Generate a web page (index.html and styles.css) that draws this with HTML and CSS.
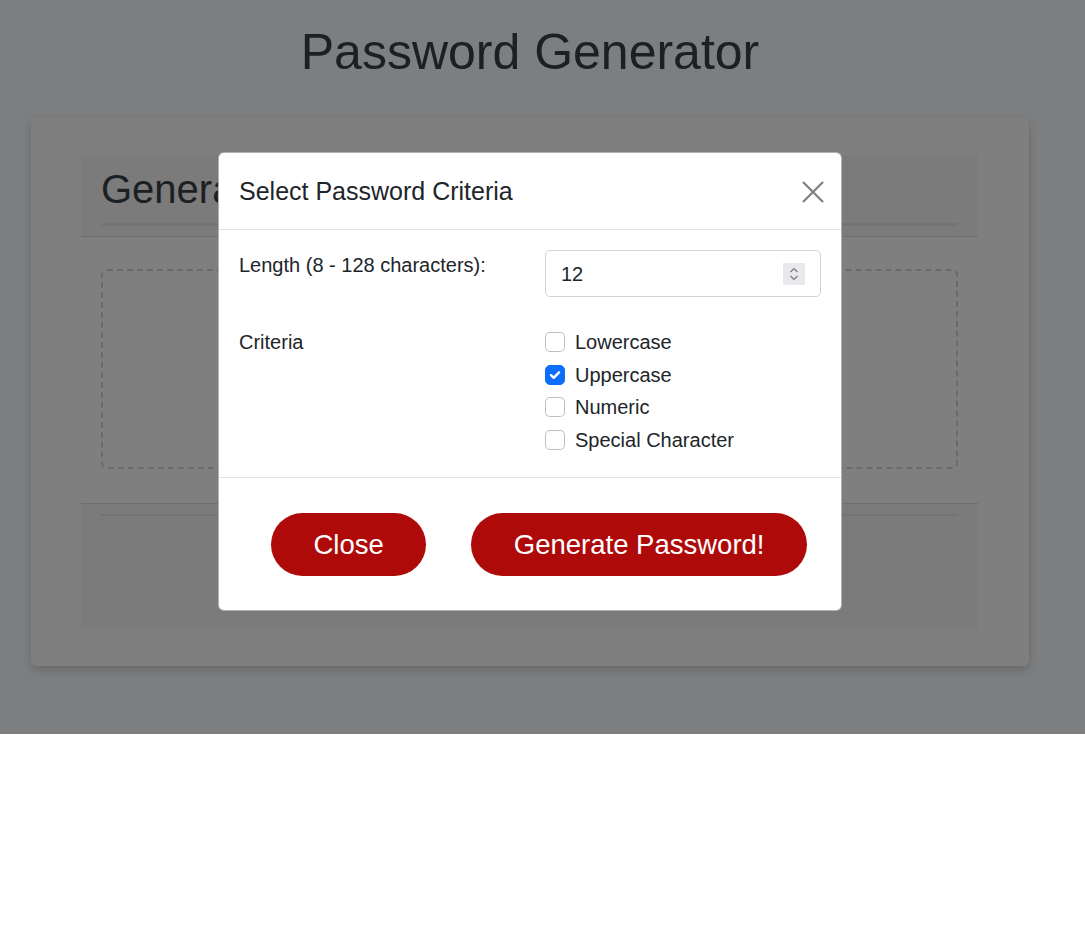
FILE: index.html
```html
<!DOCTYPE html>
<html lang="en">
<head>
<meta charset="utf-8">
<title>Password Generator</title>
<link rel="stylesheet" href="styles.css">
</head>
<body>
<div class="page">
  <div class="wrapper">
    <h1 class="page-title">Password Generator</h1>
    <div class="outer-card">
      <div class="card">
        <div class="card-header">
          <h2 class="card-title">Generate a Password</h2>
          <div class="header-rule"></div>
        </div>
        <div class="card-body">
          <div class="dash-box"></div>
        </div>
        <div class="card-footer">
          <div class="footer-rule"></div>
        </div>
      </div>
    </div>
  </div>
  <div class="backdrop"></div>
</div>

<div class="modal">
  <div class="modal-header">
    <h5 class="modal-title">Select Password Criteria</h5>
    <button class="btn-close" type="button" aria-label="Close">
      <svg width="22" height="22" viewBox="0 0 22 22"><path d="M1 1L21 21M21 1L1 21" stroke="#000" stroke-width="2.2" fill="none"/></svg>
    </button>
  </div>
  <div class="modal-body">
    <div class="form-grid">
      <label class="form-label">Length (8 - 128 characters):</label>
      <div class="number-input">
        <span class="number-value">12</span>
        <span class="spinner">
          <svg width="22" height="22" viewBox="0 0 22 22"><path d="M7.5 9L11 5.5L14.5 9M7.5 13L11 16.5L14.5 13" stroke="#7a7a7a" stroke-width="1.2" fill="none"/></svg>
        </span>
      </div>
      <div class="form-label">Criteria</div>
      <div class="checks">
        <div class="form-check"><span class="check-box"></span><span class="check-label">Lowercase</span></div>
        <div class="form-check"><span class="check-box checked"><svg width="20" height="20" viewBox="0 0 20 20"><path d="M6 10.2L8.7 12.8L14 7.3" stroke="#fff" stroke-width="2.4" fill="none" stroke-linecap="round" stroke-linejoin="round"/></svg></span><span class="check-label">Uppercase</span></div>
        <div class="form-check"><span class="check-box"></span><span class="check-label">Numeric</span></div>
        <div class="form-check"><span class="check-box"></span><span class="check-label">Special Character</span></div>
      </div>
    </div>
  </div>
  <div class="modal-footer">
    <button class="btn-red" type="button">Close</button>
    <button class="btn-red" type="button">Generate Password!</button>
  </div>
</div>
</body>
</html>
```

FILE: styles.css
```css
html {
  font-size: 20px;
}

body {
  margin: 0;
  font-family: "Liberation Sans", Arial, sans-serif;
  font-size: 1rem;
  line-height: 1.5;
  color: #212529;
  background: #ffffff;
}

.page {
  position: relative;
  height: 734px;
  background: #fafcff;
}

.wrapper {
  width: 998px;
  margin-left: 31px;
  padding-top: 22px;
}

.page-title {
  margin: 0 0 36px;
  font-size: 50px;
  font-weight: 400;
  line-height: 60px;
  text-align: center;
  color: #3a4047;
}

.outer-card {
  background: #ffffff;
  border-radius: 6px;
  box-shadow: 0 4px 10px rgba(0, 0, 0, 0.18);
  padding: 37px 51px 37px 50px;
}

.card {
  background: #ffffff;
}

.card-header {
  background: #f6f6f6;
  padding: 10px 20px;
  border-bottom: 1px solid #dfdfdf;
}

.card-title {
  margin: 0 0 10px;
  font-size: 40px;
  font-weight: 400;
  line-height: 48px;
  color: #3a4047;
  white-space: nowrap;
}

.header-rule {
  height: 3px;
  background: #e8e8e8;
}

.card-body {
  padding: 32px 20px 34px;
}

.dash-box {
  height: 196px;
  border: 2px dashed #d4d4d6;
  border-radius: 6px;
}

.card-footer {
  background: #f6f6f6;
  border-top: 1px solid #dfdfdf;
  height: 115px;
  padding: 10px 20px 0;
}

.footer-rule {
  height: 2px;
  background: #e6e6e6;
}

.backdrop {
  position: absolute;
  inset: 0;
  background: rgba(0, 0, 0, 0.5);
}

.modal {
  position: absolute;
  left: 218px;
  top: 152px;
  width: 624px;
  box-sizing: border-box;
  background: #ffffff;
  border: 1px solid rgba(0, 0, 0, 0.3);
  border-radius: 6px;
}

.modal-header {
  display: flex;
  align-items: center;
  justify-content: space-between;
  padding: 20px 20px 18.5px;
  border-bottom: 1px solid #dee2e6;
}

.modal-title {
  margin: 0;
  font-size: 25px;
  font-weight: 400;
  line-height: 37.5px;
  color: #212529;
}

.btn-close {
  display: flex;
  align-items: center;
  justify-content: center;
  width: 30px;
  height: 30px;
  margin-right: -7px;
  padding: 0;
  border: 0;
  background: transparent;
  opacity: 0.5;
}

.modal-body {
  padding: 20px;
}

.form-grid {
  display: grid;
  grid-template-columns: 1fr 1fr;
  column-gap: 30px;
  row-gap: 30px;
}

.form-label {
  line-height: 30px;
  color: #212529;
}

.number-input {
  display: flex;
  align-items: center;
  justify-content: space-between;
  height: 47px;
  box-sizing: border-box;
  padding: 0 15px;
  border: 1px solid #ced4da;
  border-radius: 5px;
  background: #ffffff;
}

.number-value {
  line-height: 30px;
  color: #212529;
}

.spinner {
  display: flex;
  width: 22px;
  height: 22px;
  background: #e9e9ed;
}

.checks {
  display: flex;
  flex-direction: column;
}

.form-check {
  display: flex;
  align-items: flex-start;
  min-height: 30px;
  margin-bottom: 2.5px;
}

.check-box {
  display: flex;
  width: 20px;
  height: 20px;
  margin-top: 5px;
  margin-right: 10px;
  box-sizing: border-box;
  border: 1px solid rgba(0, 0, 0, 0.25);
  border-radius: 5px;
  background: #ffffff;
}

.check-box.checked {
  border-color: #0d6efd;
  background: #0d6efd;
}

.check-box.checked svg {
  margin: -1px;
}

.check-label {
  line-height: 30px;
  color: #212529;
}

.modal-footer {
  display: flex;
  align-items: center;
  gap: 45px;
  padding: 35px 35px 34px 52px;
  border-top: 1px solid #dee2e6;
}

.btn-red {
  flex: none;
  height: 63px;
  padding: 0 42.5px;
  border: 0;
  border-radius: 32px;
  background: #af0a0a;
  color: #ffffff;
  font-family: "Liberation Sans", Arial, sans-serif;
  font-size: 27.5px;
  line-height: 41px;
  white-space: nowrap;
}
```
